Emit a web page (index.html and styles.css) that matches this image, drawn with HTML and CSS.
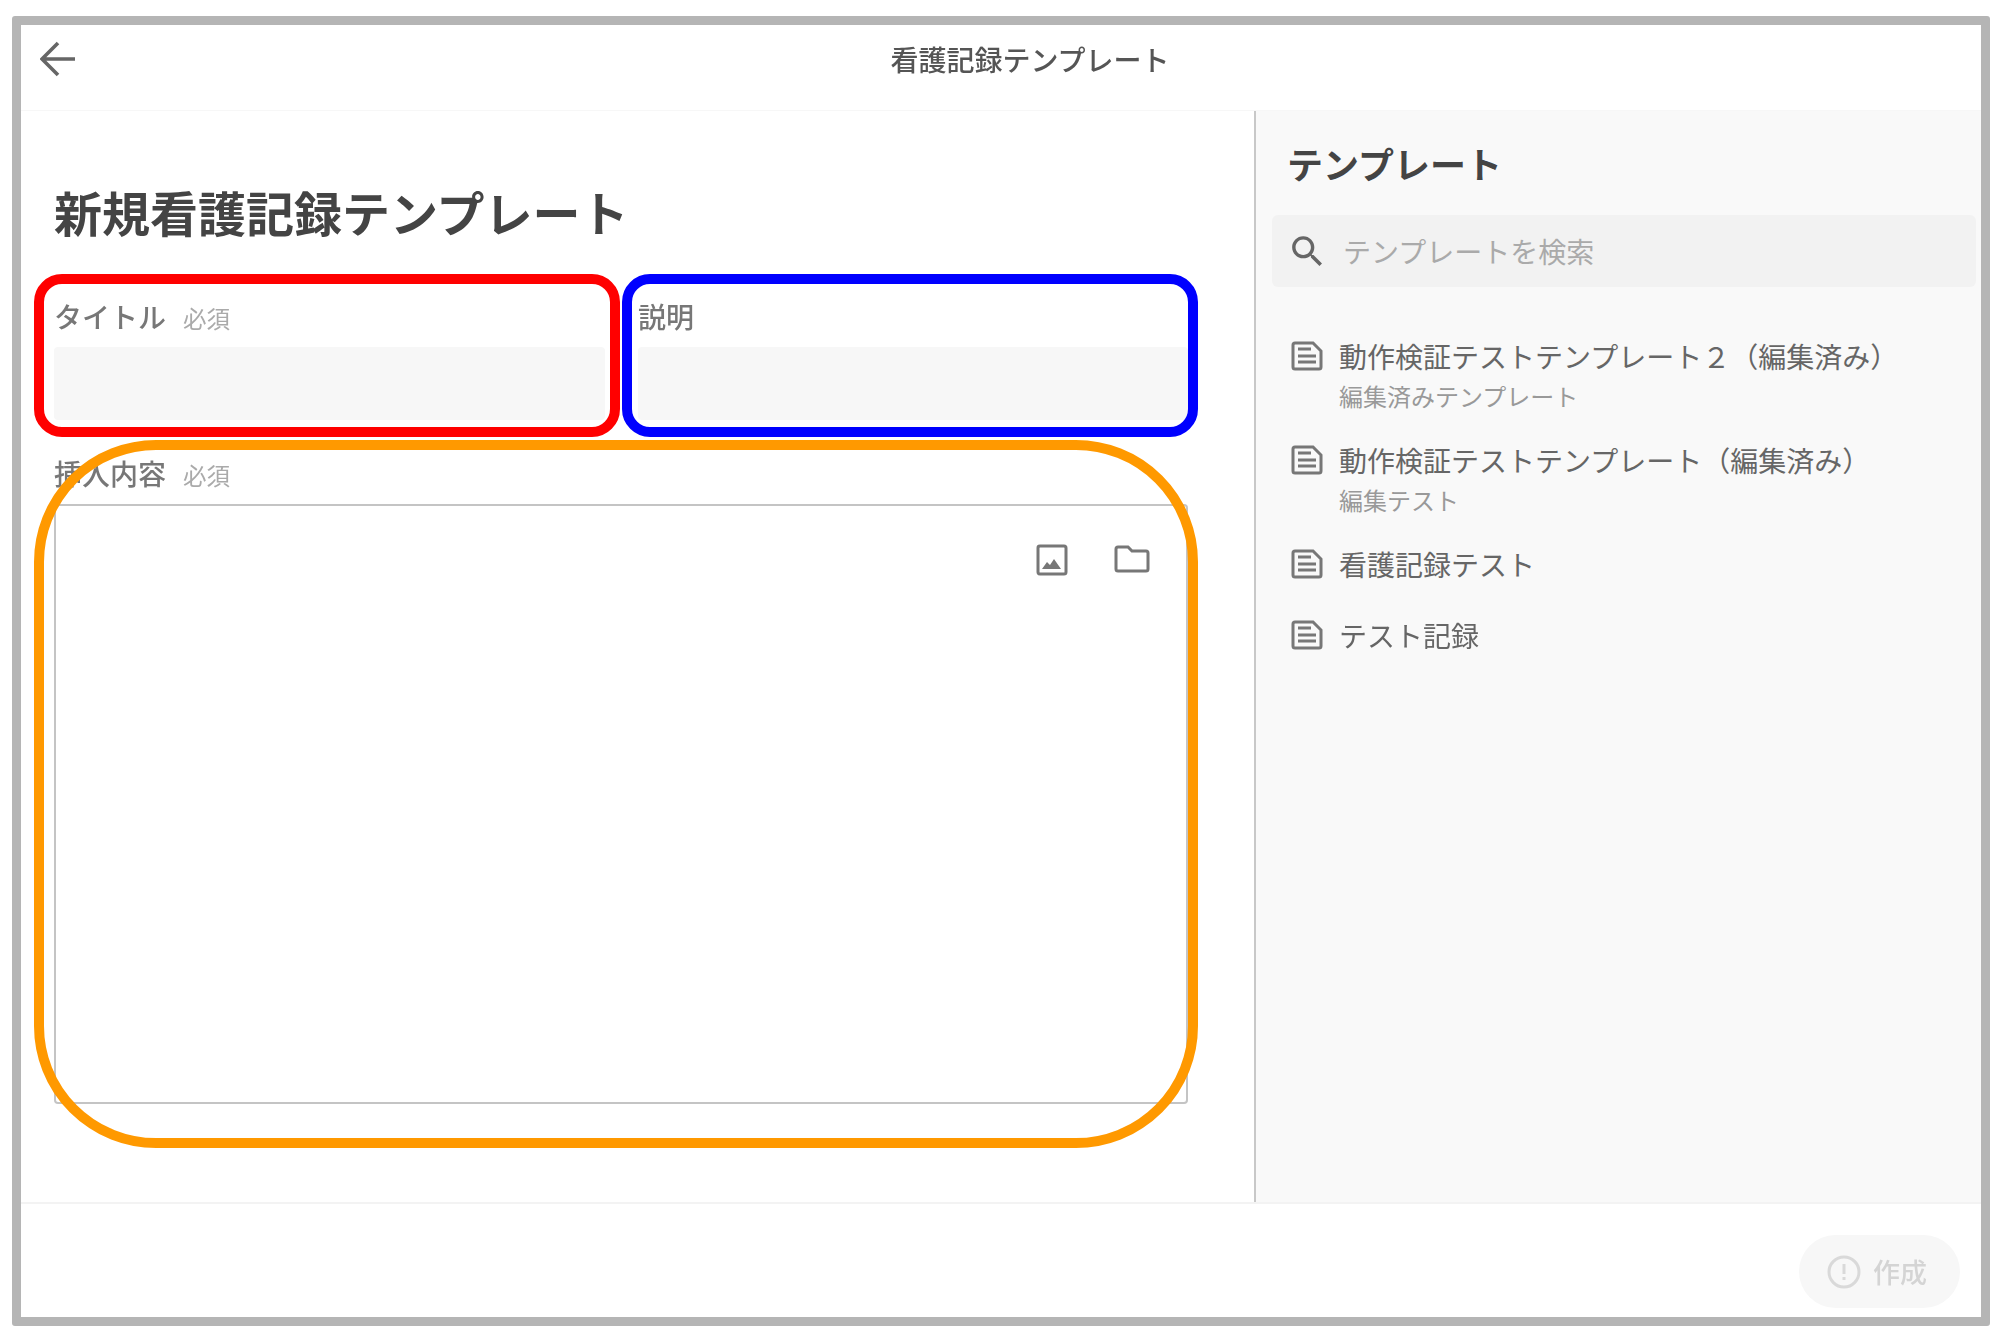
FILE: index.html
```html
<!DOCTYPE html>
<html lang="ja">
<head>
    <meta charset="UTF-8">
    <meta name="viewport" content="width=device-width, initial-scale=1.0">
    <title>看護記録テンプレート</title>
    <link rel="stylesheet" href="styles.css">
</head>
<body>
    <div class="frame">
        <header class="topbar">
            <button class="back" aria-label="戻る">
                <svg width="37" height="36" viewBox="0 0 37 36"><path d="M35 18H3M18 2 2 18l16 16" fill="none" stroke="#666" stroke-width="3.6"/></svg>
            </button>
            <div class="topbar-title">看護記録テンプレート</div>
        </header>

        <div class="main">
            <section class="editor">
                <h1>新規看護記録テンプレート</h1>
                <div class="field-row">
                    <div class="field">
                        <label>タイトル<span class="required">必須</span></label>
                        <div class="input"></div>
                    </div>
                    <div class="field">
                        <label>説明</label>
                        <div class="input"></div>
                    </div>
                </div>
                <div class="field">
                    <label>挿入内容<span class="required">必須</span></label>
                    <div class="textarea">
                        <svg width="32" height="32" viewBox="0 0 32 32">
                            <rect x="2" y="2" width="28" height="28" rx="2" fill="none" stroke="#777" stroke-width="3"/>
                            <path d="M6 25l5-7 3 3 4-6 7 10z" fill="#777"/>
                        </svg>
                        <svg class="folder" width="36" height="28" viewBox="0 0 36 28">
                            <path d="M2 4a2 2 0 0 1 2-2h10l4 4h14a2 2 0 0 1 2 2v16a2 2 0 0 1-2 2H4a2 2 0 0 1-2-2z" fill="none" stroke="#777" stroke-width="3"/>
                        </svg>
                    </div>
                </div>

                <!-- 注釈の枠 -->
                <div class="mark mark-red"></div>
                <div class="mark mark-blue"></div>
                <div class="mark mark-orange"></div>
            </section>

            <aside class="sidebar">
                <h2>テンプレート</h2>
                <div class="search">
                    <svg width="41" height="41" viewBox="0 0 24 24"><path fill="#666" d="M15.5 14h-.79l-.28-.27C15.41 12.59 16 11.11 16 9.5 16 5.91 13.09 3 9.5 3S3 5.91 3 9.5 5.91 16 9.5 16c1.61 0 3.09-.59 4.23-1.57l.27.28v.79l5 4.99L20.49 19l-4.99-5zm-6 0C7.01 14 5 11.99 5 9.5S7.01 5 9.5 5 14 7.01 14 9.5 11.99 14 9.5 14z"/></svg>
                    <span>テンプレートを検索</span>
                </div>
                <ul class="template-list">
                    <li>
                        <svg class="doc" width="32" height="30" viewBox="0 0 32 30"><use href="#doc"/></svg>
                        <div>
                            <div class="name">動作検証テストテンプレート２（編集済み）</div>
                            <div class="desc">編集済みテンプレート</div>
                        </div>
                    </li>
                    <li>
                        <svg class="doc" width="32" height="30" viewBox="0 0 32 30"><use href="#doc"/></svg>
                        <div>
                            <div class="name">動作検証テストテンプレート（編集済み）</div>
                            <div class="desc">編集テスト</div>
                        </div>
                    </li>
                    <li>
                        <svg class="doc" width="32" height="30" viewBox="0 0 32 30"><use href="#doc"/></svg>
                        <div class="name">看護記録テスト</div>
                    </li>
                    <li>
                        <svg class="doc" width="32" height="30" viewBox="0 0 32 30"><use href="#doc"/></svg>
                        <div class="name">テスト記録</div>
                    </li>
                </ul>
            </aside>
        </div>

        <footer class="footer">
            <button class="create" disabled>
                <svg width="34" height="34" viewBox="0 0 34 34">
                    <circle cx="17" cy="17" r="15" fill="none" stroke="#d9d9d9" stroke-width="3"/>
                    <path d="M17 9v10M17 22v3" stroke="#d9d9d9" stroke-width="3" fill="none"/>
                </svg>
                作成
            </button>
        </footer>
    </div>

    <svg width="0" height="0" class="defs">
        <symbol id="doc" viewBox="0 0 32 30">
            <path d="M2 4a2 2 0 0 1 2-2h18l8 8v16a2 2 0 0 1-2 2H4a2 2 0 0 1-2-2z" fill="none" stroke="#777" stroke-width="3"/>
            <path d="M7 8h13M7 15h18M7 21h18" fill="none" stroke="#777" stroke-width="3"/>
        </symbol>
    </svg>
</body>
</html>
```

FILE: styles.css
```css
* {
    box-sizing: border-box;
}
body {
    margin: 0;
    background-color: #fff;
    color: #444;
    font-family: "Noto Sans CJK JP", "Noto Sans", sans-serif;
}
.frame {
    display: flex;
    flex-direction: column;
    width: 1978px;
    height: 1310px;
    margin: 16px 0 0 12px;
    border: 9px solid #b5b5b5;
    border-radius: 3px;
    filter: blur(0.7px);
}
.defs {
    display: block;
}

/* ヘッダー */
.topbar {
    position: relative;
    display: flex;
    justify-content: center;
    align-items: center;
    flex: none;
    height: 86px;
    padding: 0 0 18px 58px;
    border-bottom: 1px solid #f7f7f7;
}
.back {
    position: absolute;
    left: 19px;
    top: 16px;
    padding: 0;
    border: none;
    background: none;
    line-height: 0;
}
.topbar-title {
    font-size: 28px;
    font-weight: 500;
    color: #555;
}

.main {
    display: flex;
    flex: 1;
    min-height: 0;
}

/* 左側の入力欄 */
.editor {
    position: relative;
    flex: 1;
    padding: 70px 66px 0 33px;
}
h1 {
    margin: 0 0 54px;
    font-size: 48px;
    font-weight: 700;
    line-height: 60px;
    color: #444;
}
.field-row {
    display: grid;
    grid-template-columns: 551px 550px;
    column-gap: 33px;
    margin-bottom: 32px;
}
.field label {
    display: block;
    height: 52px;
    font-size: 28px;
    font-weight: 500;
    line-height: 43px;
    color: #777;
}
.required {
    margin-left: 17px;
    font-size: 23.5px;
    font-weight: 400;
    color: #aaa;
}
.input {
    height: 73px;
    background-color: #f7f7f7;
    border-radius: 4px;
}
.textarea {
    display: flex;
    justify-content: flex-end;
    align-items: flex-start;
    gap: 46px;
    height: 600px;
    padding: 38px 36px 0 0;
    border: 2px solid #c4c4c4;
    border-radius: 4px;
}
.folder {
    margin-top: 1px;
}

/* 注釈の枠 */
.mark {
    position: absolute;
    border-style: solid;
    pointer-events: none;
}
.mark-red {
    left: 13px;
    top: 163px;
    width: 586px;
    height: 163px;
    border: 10px solid #f00;
    border-radius: 28px;
}
.mark-blue {
    left: 601px;
    top: 163px;
    width: 576px;
    height: 163px;
    border: 10px solid #00f;
    border-radius: 28px;
}
.mark-orange {
    left: 13px;
    top: 329px;
    width: 1164px;
    height: 708px;
    border: 10px solid #f90;
    border-radius: 122px;
}

/* 右側のテンプレート一覧 */
.sidebar {
    flex: none;
    width: 727px;
    padding: 0 5px 0 16px;
    background-color: #f9f9f9;
    border-left: 2px solid #c8c8c8;
}
h2 {
    margin: 0;
    padding: 26px 0 0 15px;
    font-size: 36px;
    font-weight: 700;
    line-height: 52px;
    color: #444;
}
.search {
    display: flex;
    align-items: center;
    gap: 15px;
    height: 72px;
    margin-top: 26px;
    padding-left: 15px;
    background-color: #f2f2f2;
    border-radius: 6px;
    font-size: 28px;
    color: #aaa;
}
.template-list {
    margin: 48px 0 0;
    padding: 0 0 0 19px;
    list-style: none;
}
.template-list li {
    display: flex;
    gap: 16px;
    margin-bottom: 29px;
}
.doc {
    flex: none;
    margin-top: 6px;
}
.name {
    font-size: 28px;
    line-height: 42px;
    color: #666;
}
.desc {
    margin-top: 5px;
    font-size: 24px;
    line-height: 28px;
    color: #999;
}

/* フッター */
.footer {
    display: flex;
    justify-content: flex-end;
    flex: none;
    height: 115px;
    padding: 31px 21px 0 0;
    border-top: 2px solid #f3f3f3;
}
.create {
    display: flex;
    align-items: center;
    gap: 12px;
    height: 73px;
    padding: 0 33px 0 28px;
    border: none;
    border-radius: 37px;
    background-color: #f7f7f7;
    font-family: inherit;
    font-size: 27px;
    font-weight: 500;
    color: #d4d4d4;
}
```
